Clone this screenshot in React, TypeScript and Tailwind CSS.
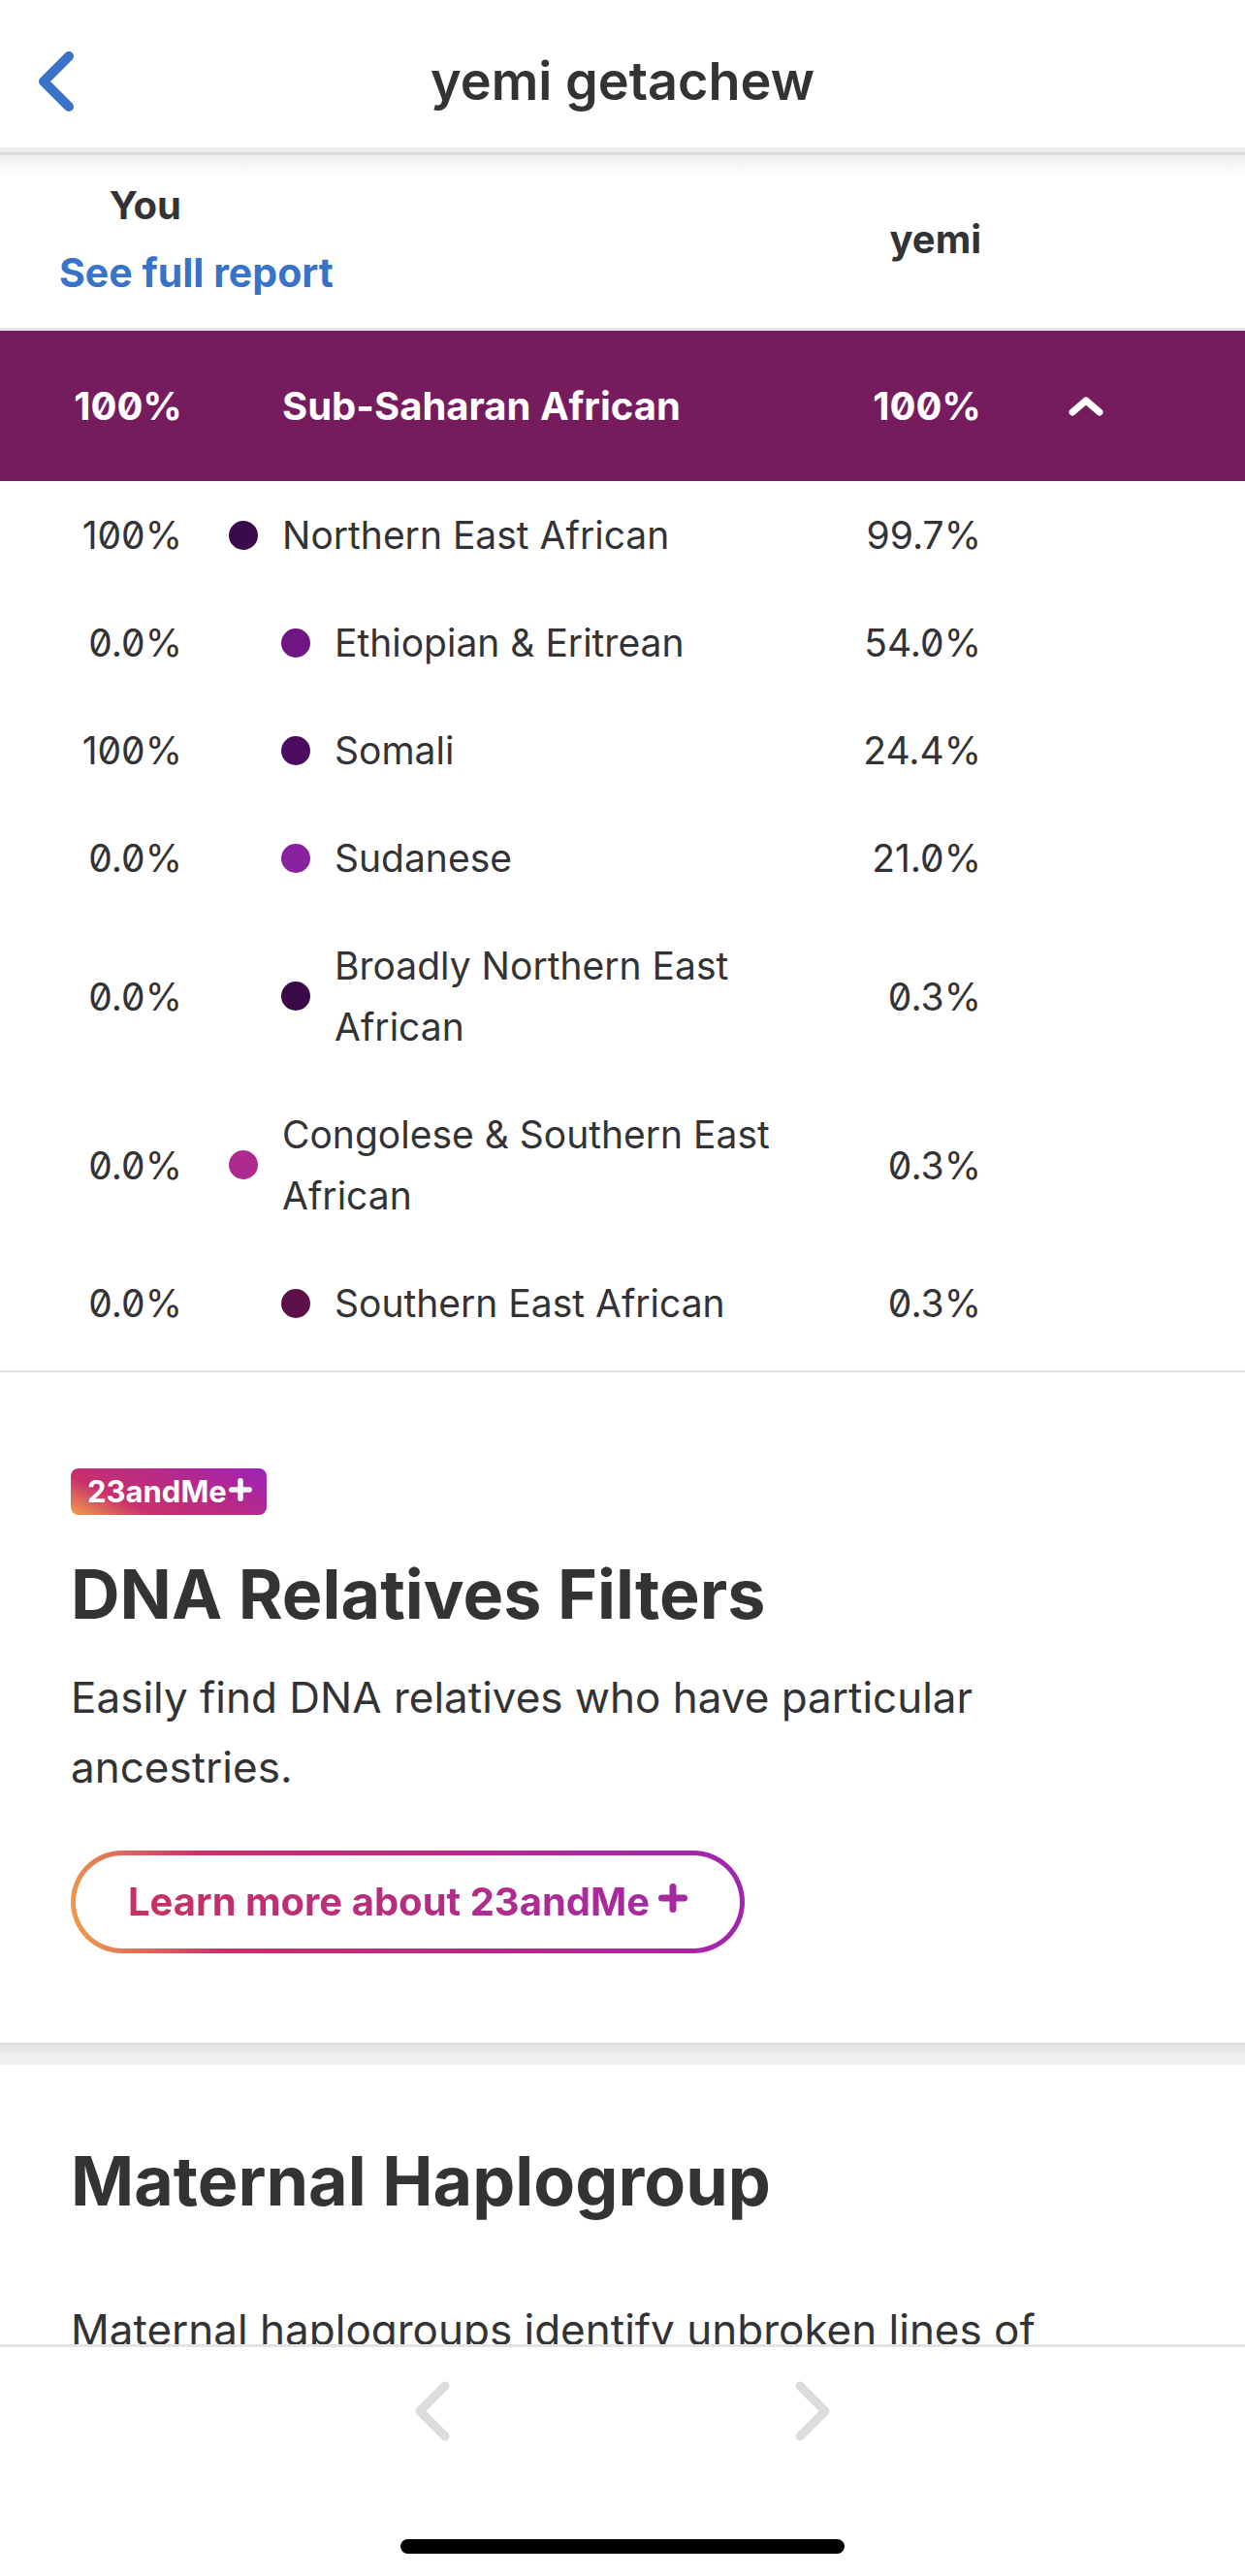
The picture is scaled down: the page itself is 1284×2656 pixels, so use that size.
import React from 'react';

type Row = {
  you: string;
  name: string;
  them: string;
  dot: string;
  sub: boolean;
};

const rows: Row[] = [
  { you: '100%', name: 'Northern East African', them: '99.7%', dot: 'bg-[#3b0a4a]', sub: false },
  { you: '0.0%', name: 'Ethiopian & Eritrean', them: '54.0%', dot: 'bg-[#6f1684]', sub: true },
  { you: '100%', name: 'Somali', them: '24.4%', dot: 'bg-[#4b0c60]', sub: true },
  { you: '0.0%', name: 'Sudanese', them: '21.0%', dot: 'bg-[#88229e]', sub: true },
  { you: '0.0%', name: 'Broadly Northern East African', them: '0.3%', dot: 'bg-[#390a47]', sub: true },
  { you: '0.0%', name: 'Congolese & Southern East African', them: '0.3%', dot: 'bg-[#ae2a8e]', sub: false },
  { you: '0.0%', name: 'Southern East African', them: '0.3%', dot: 'bg-[#5d0f4a]', sub: true },
];

function Chevron({ dir, color, stroke }: { dir: 'left' | 'right'; color: string; stroke: number }) {
  const pts = dir === 'left' ? '31,5 5,31 31,57' : '5,5 31,31 5,57';
  return (
    <svg width="36" height="62" viewBox="0 0 36 62" fill="none">
      <polyline points={pts} stroke={color} strokeWidth={stroke} strokeLinecap="round" strokeLinejoin="round" />
    </svg>
  );
}

function Plus({ size, stroke, color }: { size: number; stroke: number; color: string }) {
  const h = size / 2;
  const p = stroke / 2;
  return (
    <svg width={size} height={size} viewBox={`0 0 ${size} ${size}`} fill="none">
      <line x1={h} y1={p} x2={h} y2={size - p} stroke={color} strokeWidth={stroke} strokeLinecap="round" />
      <line x1={p} y1={h} x2={size - p} y2={h} stroke={color} strokeWidth={stroke} strokeLinecap="round" />
    </svg>
  );
}

function AncestryRow({ row }: { row: Row }) {
  return (
    <div className="flex items-center py-[24px] text-[39px] leading-[63px] text-[#333335]">
      <div className="w-[188px] shrink-0 text-right slashed-zero">{row.you}</div>
      <div className={row.sub ? 'w-[102px] shrink-0' : 'w-[48px] shrink-0'} />
      <span className={`h-[30px] w-[30px] shrink-0 rounded-full ${row.dot}`} />
      <div className="ml-[25px] min-w-0 flex-1">{row.name}</div>
      <div className="w-[172px] shrink-0 text-right slashed-zero">{row.them}</div>
      <div className="w-[272px] shrink-0" />
    </div>
  );
}

export default function App() {
  return (
    <div className="flex h-[2656px] w-full flex-col overflow-hidden bg-white font-['Inter',sans-serif] text-[#333335]">
      {/* nav bar */}
      <div className="shrink-0">
        <div className="grid h-[152px] grid-cols-[1fr_auto_1fr] items-center pt-[16px]">
          <div className="pl-[40px]">
            <Chevron dir="left" color="#3873c7" stroke={10} />
          </div>
          <div className="text-[54px] font-semibold leading-[64px] text-[#333335]">yemi getachew</div>
          <div />
        </div>
        <div className="h-[5px] bg-[#ececec]" />
        <div className="h-[3px] bg-[#d9d9d9]" />
      </div>

      {/* scroll content */}
      <div className="min-h-0 flex-1 overflow-hidden">
        <div className="flex items-center bg-[linear-gradient(to_bottom,#efefef,#ffffff_22px)] pb-[33px] pt-[28px]">
          <div className="pl-[61px]">
            <div className="w-[126px] text-right text-[40px] font-bold leading-[48px]">You</div>
            <div className="mt-[21px] text-[41px] font-bold leading-[48px] text-[#3873c7]">See full report</div>
          </div>
          <div className="ml-auto mr-[272px] text-[40px] font-bold leading-[48px]">yemi</div>
        </div>
        <div className="h-[3px] bg-[#e4e4ea]" />

        <div className="flex h-[155px] items-center bg-[#761c5e] text-[40px] font-bold leading-[48px] text-white">
          <div className="w-[188px] shrink-0 text-right slashed-zero">100%</div>
          <div className="ml-[103px] flex-1">Sub-Saharan African</div>
          <div className="w-[172px] shrink-0 text-right slashed-zero">100%</div>
          <div className="flex w-[272px] shrink-0 pl-[90px]">
            <svg width="36" height="20" viewBox="0 0 36 20" fill="none">
              <polyline points="4,16 18,4 32,16" stroke="#ffffff" strokeWidth="7" strokeLinecap="round" strokeLinejoin="round" />
            </svg>
          </div>
        </div>

        <div className="border-b-[2px] border-[#e2e2e2] pb-[14px]">
          {rows.map((r) => (
            <AncestryRow key={r.name} row={r} />
          ))}
        </div>

        {/* 23andMe+ upsell */}
        <div className="px-[73px] pb-[92px] pt-[99px]">
          <div className="flex">
            <div className="flex h-[48px] w-[202px] items-center rounded-[8px] bg-[linear-gradient(25deg,#f0a24a_0%,#c9306c_28%,#b52a8a_62%,#9e22b8_100%)] pl-[17px]">
              <span className="text-[31px] font-bold leading-[40px] text-white">23andMe</span>
              <span className="-mt-[4px] ml-[2px]">
                <Plus size={24} stroke={5.5} color="#ffffff" />
              </span>
            </div>
          </div>
          <h2 className="mt-[42px] text-[70px] font-bold leading-[80px]">DNA Relatives Filters</h2>
          <p className="mt-[30px] w-[1080px] text-[44px] leading-[72px]">
            Easily find DNA relatives who have particular ancestries.
          </p>
          <div className="mt-[50px] flex">
            <div className="rounded-full bg-[linear-gradient(75deg,#f0a24a_0%,#c8306c_22%,#b62b88_58%,#a024b0_100%)] p-[5px]">
              <div className="flex h-[96px] items-center rounded-full bg-white px-[54px]">
                <span className="bg-[linear-gradient(90deg,#c83262,#a52a9f)] bg-clip-text text-[40px] font-bold leading-[48px] text-transparent">
                  Learn more about 23andMe
                </span>
                <span className="-mt-[8px] ml-[9px]">
                  <Plus size={30} stroke={7} color="#a62a9d" />
                </span>
              </div>
            </div>
          </div>
        </div>

        <div className="h-[23px] bg-[linear-gradient(to_bottom,#dfdfe1,#f0f0f2_60%)]" />

        {/* maternal haplogroup */}
        <div className="px-[73px] pt-[80px]">
          <h2 className="text-[70px] font-bold leading-[80px]">Maternal Haplogroup</h2>
          <p className="mt-[77px] w-[1080px] text-[44px] leading-[72px]">
            Maternal haplogroups identify unbroken lines of descent from mother to child, tracing back thousands of years.
          </p>
        </div>
      </div>

      {/* bottom pager */}
      <div className="flex h-[239px] shrink-0 flex-col items-center border-t-[3px] border-[#e3e3e3] bg-white">
        <div className="mt-[35px] flex gap-[356px]">
          <Chevron dir="left" color="#dcdcdc" stroke={9} />
          <Chevron dir="right" color="#dcdcdc" stroke={9} />
        </div>
        <div className="mt-[101px] h-[15px] w-[458px] rounded-full bg-black" />
      </div>
    </div>
  );
}
